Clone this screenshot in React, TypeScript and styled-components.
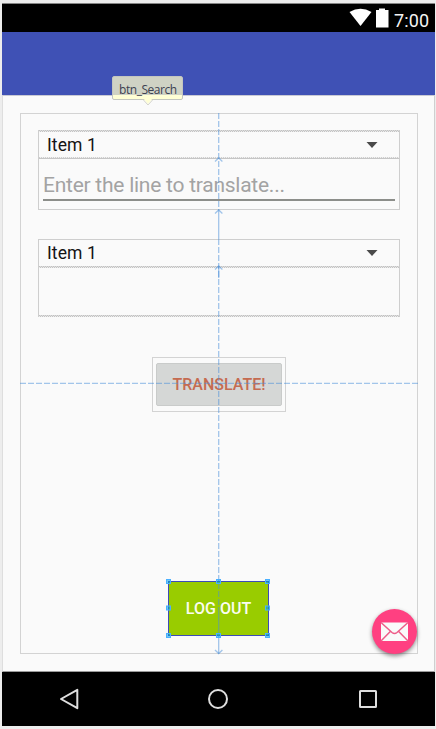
import React from "react";
import styled, { createGlobalStyle } from "styled-components";

const GlobalStyle = createGlobalStyle`
  * { box-sizing: border-box; }
  body { margin: 0; background: #ededed; font-family: Roboto, sans-serif; }
`;

const Page = styled.div`
  position: relative;
  width: 436px;
  height: 729px;
  padding: 3px 1px 3px 2px;
  overflow: hidden;
`;

const Phone = styled.div`
  display: flex;
  flex-direction: column;
  width: 433px;
  height: 723px;
  border-top: 1px solid #858585;
  background: #fafafa;
`;

const StatusBar = styled.div`
  display: flex;
  justify-content: flex-end;
  flex: 0 0 28px;
  padding-right: 6px;
  background: #000;
`;

const StatusIcons = styled.svg`
  width: 44px;
  height: 28px;
  margin-right: 1px;
`;

const Clock = styled.span`
  margin-top: 6px;
  width: 35px;
  color: #f4f4f4;
  font-size: 18px;
  line-height: 22px;
  letter-spacing: 0.15px;
  white-space: nowrap;
`;

const Toolbar = styled.div`
  flex: 0 0 63px;
  background: #3f51b5;
`;

const Content = styled.main`
  flex: 1;
  padding: 17px 16px 0 17px;
  border-top: 1px solid #c9cad4;
  border-right: 1px solid #cfcfcf;
  border-left: 1px solid #dedede;
  border-bottom: 1px solid #9b9b9b;
`;

const Layout = styled.section`
  display: flex;
  flex-direction: column;
  align-items: flex-start;
  width: 398px;
  height: 541px;
  padding: 16px 17px 0;
  border: 1px solid #d3d3d3;
`;

const FieldGroup = styled.div<{ $gap: number }>`
  width: 362px;
  margin-bottom: ${(p) => p.$gap}px;
  border: solid #cecece;
  border-width: 0 1px;
`;

const Edge = styled.div<{ $tone?: string; $zig?: boolean }>`
  height: ${(p) => (p.$zig ? 2 : 1)}px;
  background: ${(p) =>
    p.$zig
      ? "repeating-linear-gradient(90deg, #c2c2c2 0 1px, #dcdcdc 1px 2px) 0 0 / 100% 1px no-repeat, repeating-linear-gradient(90deg, #ececec 0 1px, #c4c4c4 1px 2px) 0 1px / 100% 1px no-repeat"
      : p.$tone || "#cecece"};
`;

const DottedEdge = styled.div`
  height: 1px;
  background: repeating-linear-gradient(90deg, #cfcfcf 0 1px, #f2f2f2 1px 2px);
`;

const Spinner = styled.div<{ $height: number }>`
  display: flex;
  align-items: center;
  justify-content: space-between;
  height: ${(p) => p.$height}px;
  padding: 0 21px 0 8px;
  color: #141414;
  font-size: 17.5px;
  letter-spacing: 0.1px;
`;

const Caret = styled.svg`
  width: 12px;
  height: 6px;
`;

const EditText = styled.div`
  height: 50px;
  padding: 12px 4px 0 4px;
`;

const Hint = styled.div`
  height: 30px;
  border-bottom: 2px solid #8c8e8a;
  color: #a3a3a3;
  font-size: 21px;
  line-height: 28px;
  letter-spacing: -0.25px;
  white-space: nowrap;
`;

const Result = styled.div`
  height: 47px;
`;

const ButtonBounds = styled.div`
  width: 134px;
  height: 55px;
  margin-left: 114px;
  padding: 5px 3px;
  border: 1px solid #d3d3d3;
`;

const TranslateButton = styled.button`
  display: block;
  width: 126px;
  height: 43px;
  padding: 0 0 1px;
  border: 1px solid #c9cbca;
  border-radius: 2px;
  background: #d5d7d6;
  color: #c56b50;
  font: 500 16px Roboto, sans-serif;
  white-space: nowrap;
`;

const LogoutButton = styled.button`
  width: 101px;
  height: 55px;
  margin: 169px 0 0 130px;
  padding: 0;
  border: 1px solid #3c4bb8;
  background: #99cc00;
  color: #fbfdf0;
  font: 500 16px Roboto, sans-serif;
  white-space: nowrap;
`;

const NavBar = styled.nav`
  display: flex;
  align-items: center;
  justify-content: space-between;
  flex: 0 0 54px;
  padding: 0 56.5px 0 56px;
  background: #000;
`;

const NavIcon = styled.svg`
  width: 22px;
  height: 22px;
  fill: none;
  stroke: #dedede;
  stroke-width: 2;
`;

const Guides = styled.svg`
  position: absolute;
  inset: 0;
  width: 436px;
  height: 729px;
  pointer-events: none;
  fill: none;
`;

const Tooltip = styled.div`
  position: absolute;
  left: 112px;
  top: 76px;
  width: 71px;
  height: 24px;
  padding: 5px 0 0 6px;
  border: 1px solid #c3c6bf;
  border-radius: 2px;
  background: linear-gradient(#cfd2c4 0 18px, #ffffd5 18px);
  color: #3c4150;
  font: 12px/16px "Open Sans", sans-serif;
  letter-spacing: -0.45px;
  white-space: nowrap;
`;

const TooltipTail = styled.svg`
  position: absolute;
  left: 29px;
  top: 21px;
  width: 12px;
  height: 8px;
`;

const Fab = styled.button`
  position: absolute;
  left: 372px;
  top: 608.5px;
  width: 45px;
  height: 45px;
  padding: 0;
  border: 0;
  border-radius: 50%;
  background: #ff4081;
  box-shadow: 0 2px 4px rgba(0, 0, 0, 0.45);
`;

const MailIcon = styled.svg`
  display: block;
  width: 45px;
  height: 45px;
`;

const handles = [
  [168.5, 581.5], [218.5, 581.5], [267.5, 581.5],
  [168.5, 608], [267.5, 608],
  [168.5, 635.5], [218.5, 635.5], [267.5, 635.5],
];

function ItemSpinner({ height }: { height: number }) {
  return (
    <Spinner $height={height}>
      <span>Item 1</span>
      <Caret viewBox="0 0 12 6"><path d="M0.5 0H11.5L6 6Z" fill="#4a4a4a" /></Caret>
    </Spinner>
  );
}

export default function App() {
  return (
    <Page>
      <GlobalStyle />
      <Phone>
        <StatusBar>
          <StatusIcons viewBox="0 0 44 28">
            <path d="M0.5 8Q11.5 1.5 22.5 8L11.5 22Z" fill="#fff" />
            <path d="M27 6H30V4.5H36V6H39.5V23.5H27Z" fill="#fff" />
          </StatusIcons>
          <Clock>7:00</Clock>
        </StatusBar>
        <Toolbar />
        <Content>
          <Layout>
            <FieldGroup $gap={29}>
              <Edge $zig />
              <ItemSpinner height={25} />
              <DottedEdge />
              <Edge $tone="#c6c6c6" />
              <EditText><Hint>Enter the line to translate...</Hint></EditText>
              <Edge />
            </FieldGroup>
            <FieldGroup $gap={40}>
              <Edge />
              <ItemSpinner height={26} />
              <Edge $zig />
              <Result />
              <Edge $zig />
            </FieldGroup>
            <ButtonBounds><TranslateButton>TRANSLATE!</TranslateButton></ButtonBounds>
            <LogoutButton>LOG OUT</LogoutButton>
          </Layout>
        </Content>
        <NavBar>
          <NavIcon viewBox="0 0 22 22"><path d="M3 11L19.3 1.8V20.2Z" strokeLinejoin="round" /></NavIcon>
          <NavIcon viewBox="0 0 22 22"><circle cx="11" cy="11" r="9" /></NavIcon>
          <NavIcon viewBox="0 0 22 22"><rect x="3" y="3" width="16" height="16" rx="0.5" /></NavIcon>
        </NavBar>
      </Phone>
      <Guides viewBox="0 0 436 729">
        <g stroke="#4a90d9" strokeOpacity="0.5" strokeWidth="1.3">
          <path d="M218.7 113V209M218.7 239V608" strokeDasharray="6 2" />
          <path d="M218.7 209V239M218.7 266V278M218.7 608V654" />
          <path d="M20 383.3H418" strokeDasharray="6 2" />
          <path d="M215 161.5L218.7 158L222.4 161.5M215 213.5L218.7 210L222.4 213.5M215 269.5L218.7 266L222.4 269.5M215 650L218.7 653.5L222.4 650" />
        </g>
        {handles.map(([x, y]) => (
          <rect key={`${x}-${y}`} x={x - 2} y={y - 2} width="4" height="4" fill="#00a0e8" fillOpacity="0.55" stroke="#4ab0ff" strokeWidth="1" />
        ))}
      </Guides>
      <Tooltip>
        btn_Search
        <TooltipTail viewBox="0 0 12 8">
          <path d="M1 0L6 6L11 0Z" fill="#ffffd5" />
          <path d="M1 1.5L6 7L11 1.5" fill="none" stroke="#d5d5cb" />
        </TooltipTail>
      </Tooltip>
      <Fab aria-label="Mail">
        <MailIcon viewBox="0 0 45 45">
          <rect x="9" y="13.5" width="27" height="18.5" fill="#fafafa" />
          <path d="M9 13.5L20 23.5Q22.5 25.5 25 23.5L36 13.5M9 32L18.3 22.5M36 32L26.7 22.5" fill="none" stroke="#ee5c88" strokeWidth="1.5" />
        </MailIcon>
      </Fab>
    </Page>
  );
}
